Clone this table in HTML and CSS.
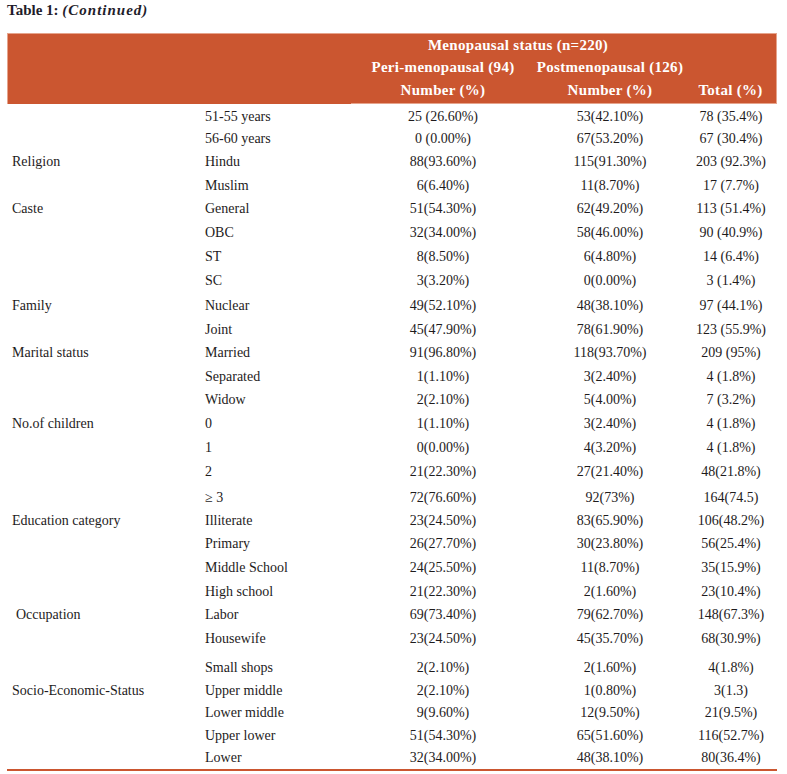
FILE: index.html
```html
<!DOCTYPE html>
<html lang="en">
<head>
<meta charset="utf-8">
<title>Table 1: (Continued)</title>
<link rel="stylesheet" href="styles.css">
</head>
<body>
<p class="caption"><b>Table 1: </b><b><i>(Continued)</i></b></p>
<table class="data">
  <colgroup>
    <col class="c1"><col class="c2"><col class="c3"><col class="c4"><col class="c5">
  </colgroup>
  <thead>
    <tr class="h1">
      <th class="edge-l edge-t" colspan="2" rowspan="3"></th>
      <th class="edge-t" colspan="2">Menopausal status (n=220)</th>
      <th class="edge-t edge-r" rowspan="2"></th>
    </tr>
    <tr class="h2">
      <th>Peri-menopausal (94)</th>
      <th>Postmenopausal (126)</th>
    </tr>
    <tr class="h3">
      <th class="edge-b">Number (%)</th>
      <th class="edge-b">Number (%)</th>
      <th class="edge-b edge-r">Total (%)</th>
    </tr>
  </thead>
  <tbody>
    <tr class="r23 first"><td></td><td>51-55 years</td><td>25 (26.60%)</td><td>53(42.10%)</td><td>78 (35.4%)</td></tr>
    <tr class="r22"><td></td><td>56-60 years</td><td>0 (0.00%)</td><td>67(53.20%)</td><td>67 (30.4%)</td></tr>
    <tr><td>Religion</td><td>Hindu</td><td>88(93.60%)</td><td>115(91.30%)</td><td>203 (92.3%)</td></tr>
    <tr class="r23"><td></td><td>Muslim</td><td>6(6.40%)</td><td>11(8.70%)</td><td>17 (7.7%)</td></tr>
    <tr><td>Caste</td><td>General</td><td>51(54.30%)</td><td>62(49.20%)</td><td>113 (51.4%)</td></tr>
    <tr><td></td><td>OBC</td><td>32(34.00%)</td><td>58(46.00%)</td><td>90 (40.9%)</td></tr>
    <tr><td></td><td>ST</td><td>8(8.50%)</td><td>6(4.80%)</td><td>14 (6.4%)</td></tr>
    <tr class="r25"><td></td><td>SC</td><td>3(3.20%)</td><td>0(0.00%)</td><td>3 (1.4%)</td></tr>
    <tr><td>Family</td><td>Nuclear</td><td>49(52.10%)</td><td>48(38.10%)</td><td>97 (44.1%)</td></tr>
    <tr class="r23"><td></td><td>Joint</td><td>45(47.90%)</td><td>78(61.90%)</td><td>123 (55.9%)</td></tr>
    <tr><td>Marital status</td><td>Married</td><td>91(96.80%)</td><td>118(93.70%)</td><td>209 (95%)</td></tr>
    <tr class="r23"><td></td><td>Separated</td><td>1(1.10%)</td><td>3(2.40%)</td><td>4 (1.8%)</td></tr>
    <tr><td></td><td>Widow</td><td>2(2.10%)</td><td>5(4.00%)</td><td>7 (3.2%)</td></tr>
    <tr><td>No.of children</td><td>0</td><td>1(1.10%)</td><td>3(2.40%)</td><td>4 (1.8%)</td></tr>
    <tr><td></td><td>1</td><td>0(0.00%)</td><td>4(3.20%)</td><td>4 (1.8%)</td></tr>
    <tr class="r26"><td></td><td>2</td><td>21(22.30%)</td><td>27(21.40%)</td><td>48(21.8%)</td></tr>
    <tr class="r23"><td></td><td>&ge; 3</td><td>72(76.60%)</td><td>92(73%)</td><td>164(74.5)</td></tr>
    <tr class="r23"><td>Education category</td><td>Illiterate</td><td>23(24.50%)</td><td>83(65.90%)</td><td>106(48.2%)</td></tr>
    <tr><td></td><td>Primary</td><td>26(27.70%)</td><td>30(23.80%)</td><td>56(25.4%)</td></tr>
    <tr><td></td><td>Middle School</td><td>24(25.50%)</td><td>11(8.70%)</td><td>35(15.9%)</td></tr>
    <tr class="r23"><td></td><td>High school</td><td>21(22.30%)</td><td>2(1.60%)</td><td>23(10.4%)</td></tr>
    <tr><td class="indent">Occupation</td><td>Labor</td><td>69(73.40%)</td><td>79(62.70%)</td><td>148(67.3%)</td></tr>
    <tr class="r30"><td></td><td>Housewife</td><td>23(24.50%)</td><td>45(35.70%)</td><td>68(30.9%)</td></tr>
    <tr class="r22"><td></td><td>Small shops</td><td>2(2.10%)</td><td>2(1.60%)</td><td>4(1.8%)</td></tr>
    <tr class="r23"><td>Socio-Economic-Status</td><td>Upper middle</td><td>2(2.10%)</td><td>1(0.80%)</td><td>3(1.3)</td></tr>
    <tr class="r22"><td></td><td>Lower middle</td><td>9(9.60%)</td><td>12(9.50%)</td><td>21(9.5%)</td></tr>
    <tr class="r23"><td></td><td>Upper lower</td><td>51(54.30%)</td><td>65(51.60%)</td><td>116(52.7%)</td></tr>
    <tr class="r22 last"><td></td><td>Lower</td><td>32(34.00%)</td><td>48(38.10%)</td><td>80(36.4%)</td></tr>
  </tbody>
</table>
</body>
</html>
```

FILE: styles.css
```css
html, body {
  margin: 0;
  padding: 0;
  background: #ffffff;
}

body {
  font-family: "Liberation Serif", "Times New Roman", serif;
  color: #1e1b1c;
  padding: 0 7px;
}

.caption {
  margin: 0;
  padding-top: 1px;
  height: 32px;
  font-size: 15px;
  line-height: 18px;
  color: #1f1d2b;
}

.caption i {
  letter-spacing: 1px;
}

.data {
  width: 770px;
  table-layout: fixed;
  border-collapse: separate;
  border-spacing: 0;
  font-size: 14px;
}

.c1 { width: 193px; }
.c2 { width: 151px; }
.c3 { width: 184px; }
.c4 { width: 150px; }
.c5 { width: 92px; }

.data thead th {
  background: #cb5630;
  color: #ffffff;
  font-weight: bold;
  font-size: 15px;
  letter-spacing: 0.3px;
  text-align: center;
  padding: 0 0 2px;
  height: 21px;
  line-height: 21px;
  vertical-align: middle;
}

.data thead .edge-t { border-top: 1px solid #e6a48c; }
.data thead .edge-b { border-bottom: 1px solid #e6a48c; }
.data thead .edge-l { border-left: 1px solid #e6a48c; }
.data thead .edge-r { border-right: 1px solid #e6a48c; }

.data thead .h1 th {
  height: 23px;
  line-height: 23px;
  padding-bottom: 0;
}

.data tbody td {
  padding: 0;
  height: 24px;
  line-height: 24px;
  vertical-align: top;
  text-align: center;
  white-space: nowrap;
}

.data tbody tr.first td {
  padding-top: 1px;
  height: 22px;
}

.data tbody td:nth-child(1),
.data tbody td:nth-child(2) {
  text-align: left;
  padding-left: 5px;
}

.data tbody td.indent {
  padding-left: 9px;
}

.data tbody tr.r22 td { height: 22px; line-height: 22px; }
.data tbody tr.r23 td { height: 23px; line-height: 23px; }
.data tbody tr.r25 td { height: 25px; }
.data tbody tr.r26 td { height: 26px; }
.data tbody tr.r30 td { height: 30px; }

.data tbody tr.last td {
  height: 21px;
  border-bottom: 2px solid #cb5630;
}
```
